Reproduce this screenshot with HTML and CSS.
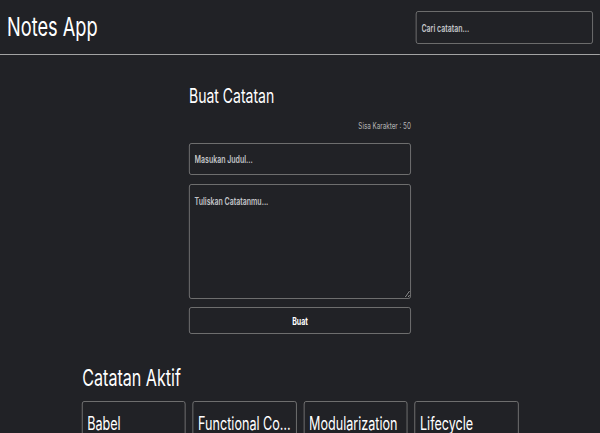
FILE: index.html
```html
<!DOCTYPE html>
<html lang="id">
<head>
<meta charset="utf-8">
<title>Notes App</title>
<link rel="stylesheet" href="styles.css">
</head>
<body>
<div class="page">
  <header class="app-header">
    <h1 class="app-title">Notes App</h1>
    <input class="search" type="text" placeholder="Cari catatan...">
  </header>
  <main class="main">
    <section class="create">
      <h2 class="create-title">Buat Catatan</h2>
      <p class="char-left">Sisa Karakter : 50</p>
      <form class="create-form">
        <input class="field field-title" type="text" placeholder="Masukan Judul...">
        <textarea class="field field-body" placeholder="Tuliskan Catatanmu..."></textarea>
        <button class="submit" type="button">Buat</button>
      </form>
    </section>
    <section class="notes">
      <h2 class="notes-title">Catatan Aktif</h2>
      <div class="notes-list">
        <article class="note"><h3 class="note-title">Babel</h3></article>
        <article class="note"><h3 class="note-title">Functional Component</h3></article>
        <article class="note"><h3 class="note-title">Modularization</h3></article>
        <article class="note"><h3 class="note-title">Lifecycle</h3></article>
      </div>
    </section>
  </main>
</div>
</body>
</html>
```

FILE: styles.css
```css
html, body {
  margin: 0;
  padding: 0;
  background: #212226;
  overflow: hidden;
  height: 100%;
}

.page {
  width: 857px;
  transform: scaleX(0.7);
  transform-origin: 0 0;
  font-family: Inter, "Noto Sans", sans-serif;
  color: #ffffff;
}

.app-header {
  box-sizing: border-box;
  height: 55px;
  display: flex;
  align-items: center;
  justify-content: space-between;
  padding: 0 10px;
  border-bottom: 1px solid #a3a3a3;
}

.app-title {
  margin: 0;
  font-size: 26px;
  font-weight: 400;
  line-height: 30px;
}

.search {
  box-sizing: border-box;
  width: 253px;
  height: 33px;
  margin-top: 1px;
  padding: 0 7px;
  background: transparent;
  border: 1px solid #7a7a7a;
  border-radius: 3px;
  color: #fff;
  font-family: Inter, sans-serif;
  font-size: 10px;
  font-weight: 600;
  outline: none;
}

.search::placeholder,
.field::placeholder {
  color: #c2c4c8;
  opacity: 1;
}

.main {
  display: flex;
  flex-direction: column;
  align-items: center;
}

.create {
  width: 317px;
  margin-top: 29px;
  display: flex;
  flex-direction: column;
}

.create-title {
  margin: 0;
  font-size: 20px;
  font-weight: 400;
  line-height: 24px;
}

.char-left {
  margin: 12px 0 0;
  text-align: right;
  font-size: 9px;
  line-height: 12px;
  color: #b4b4b4;
}

.create-form {
  margin-top: 11px;
  display: flex;
  flex-direction: column;
}

.field {
  box-sizing: border-box;
  width: 100%;
  background: transparent;
  border: 1px solid #7c7c7c;
  border-radius: 3px;
  color: #fff;
  font-family: Inter, sans-serif;
  font-size: 10px;
  font-weight: 600;
  outline: none;
  margin: 0;
}

.field-title {
  height: 32px;
  padding: 0 7px;
}

.field-body {
  height: 115px;
  margin-top: 9px;
  padding: 10px 7px;
  resize: vertical;
}

.submit {
  box-sizing: border-box;
  height: 27px;
  margin-top: 8px;
  background: transparent;
  border: 1px solid #7c7c7c;
  border-radius: 3px;
  color: #fff;
  font-family: Inter, sans-serif;
  font-size: 10px;
  font-weight: 700;
}

.notes {
  width: 624px;
  margin-top: 31px;
}

.notes-title {
  margin: 0 0 0 1px;
  font-size: 23px;
  font-weight: 400;
  line-height: 27px;
}

.notes-list {
  margin-top: 9px;
  display: grid;
  grid-template-columns: repeat(4, 1fr);
  gap: 10px;
}

.note {
  box-sizing: border-box;
  border: 1px solid #7c7c7c;
  border-radius: 3px;
  padding: 11px 7px 20px;
  min-width: 0;
}

.note-title {
  margin: 0;
  font-size: 18px;
  font-weight: 400;
  line-height: 22px;
  white-space: nowrap;
  overflow: hidden;
  text-overflow: ellipsis;
}
```
